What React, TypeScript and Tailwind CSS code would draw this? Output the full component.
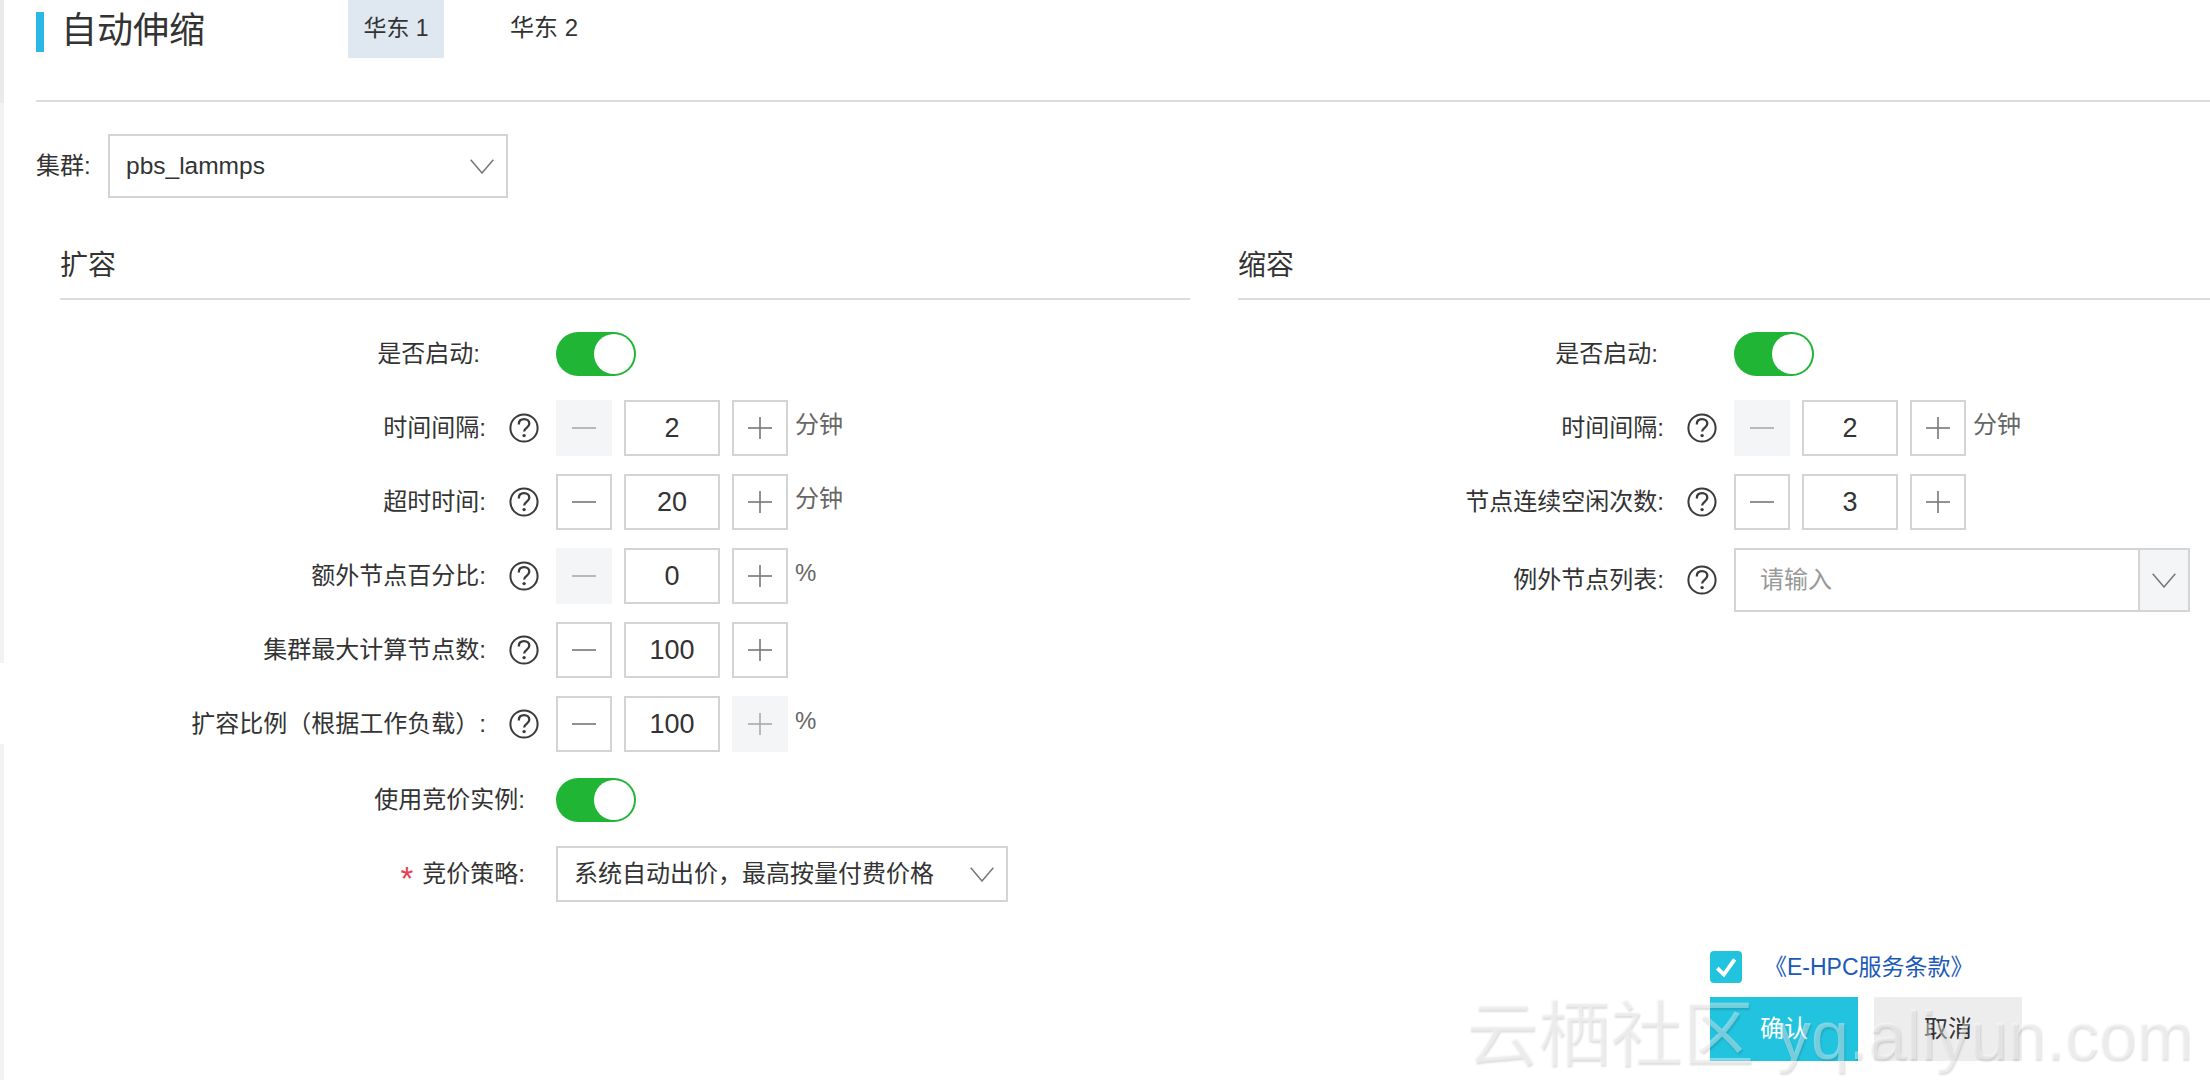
const FONT = "font-['Liberation_Sans','Noto_Sans_CJK_SC',sans-serif]";

function Help() {
  return (
    <svg viewBox="0 0 30 30" className="w-[30px] h-[30px] shrink-0">
      <circle cx="15" cy="15" r="13.6" fill="none" stroke="#3a3a3a" strokeWidth="2" />
      <path d="M9.8 11.4c0-3.4 2.3-5.2 5.3-5.2s5.2 1.9 5.2 4.6c0 4-5.2 4-5.2 7.7" fill="none" stroke="#3a3a3a" strokeWidth="2.3" />
      <circle cx="15.1" cy="22.6" r="1.7" fill="#3a3a3a" />
    </svg>
  );
}

function Chevron() {
  return (
    <svg viewBox="0 0 24 15" className="w-[24px] h-[15px] shrink-0">
      <polyline points="0.7,0.7 12,14 23.3,0.7" fill="none" stroke="#777777" strokeWidth="1.5" />
    </svg>
  );
}

function Toggle() {
  return (
    <div className="w-[80px] h-[44px] rounded-full bg-[#21b536] flex justify-end items-center pr-[2px] shrink-0">
      <div className="w-[40px] h-[40px] rounded-full bg-white" />
    </div>
  );
}

function StepBtn({ kind, disabled }: { kind: "minus" | "plus"; disabled?: boolean }) {
  const color = disabled ? "#a9abad" : "#777777";
  return (
    <div
      className={
        disabled
          ? "w-[56px] h-[56px] bg-[#f4f5f7] flex items-center justify-center shrink-0"
          : "w-[56px] h-[56px] border-2 border-[#d4d4d4] bg-white flex items-center justify-center shrink-0"
      }
    >
      <svg viewBox="0 0 24 24" className="w-[24px] h-[24px]">
        <line x1="0" y1="12" x2="24" y2="12" stroke={color} strokeWidth="1.6" />
        {kind === "plus" && <line x1="12" y1="1" x2="12" y2="23" stroke={color} strokeWidth="1.6" />}
      </svg>
    </div>
  );
}

function Stepper({ value, unit, minusOff, plusOff }: { value: string; unit?: string; minusOff?: boolean; plusOff?: boolean }) {
  return (
    <div className="flex items-start">
      <StepBtn kind="minus" disabled={minusOff} />
      <div className="w-[96px] h-[56px] mx-[12px] border-2 border-[#d4d4d4] flex items-center justify-center text-[27px] text-[#333333] shrink-0">
        {value}
      </div>
      <StepBtn kind="plus" disabled={plusOff} />
      {unit && <span className="ml-[7px] mt-[9px] text-[24px] leading-[32px] text-[#666666]">{unit}</span>}
    </div>
  );
}

function Row({ label, pad, help, required, mt, children }: { label: string; pad: string; help?: boolean; required?: boolean; mt: string; children: React.ReactNode }) {
  return (
    <div className={`flex items-center ${mt}`}>
      <div className="w-[496px] shrink-0 flex items-center justify-end">
        {required && <span className="mr-[9px] mt-[9px] text-[33px] leading-none text-[#e8404f]">*</span>}
        <span className={`text-[24px] text-[#333333] whitespace-nowrap ${pad}`}>{label}</span>
        {help && (
          <div className="w-[70px] flex justify-start pl-[23px] shrink-0">
            <Help />
          </div>
        )}
      </div>
      {children}
    </div>
  );
}

function SectionTitle({ text }: { text: string }) {
  return (
    <div className="h-[68px] border-b-2 border-[#dcdcdc] pt-[16px] text-[28px] leading-[36px] text-[#333333] whitespace-nowrap">{text}</div>
  );
}

export default function App() {
  return (
    <div className={`w-[2210px] h-[1080px] bg-white flex relative overflow-hidden ${FONT}`}>
      <div className="w-[4px] h-full flex flex-col shrink-0">
        <div className="h-[103px] bg-[#e9eaec]" />
        <div className="h-[560px] bg-[#f1f2f4]" />
        <div className="h-[81px] bg-white" />
        <div className="flex-1 bg-[#f1f2f4]" />
      </div>

      <div className="flex-1 min-w-0 pl-[32px] flex flex-col">
        <div className="h-[102px] border-b-2 border-[#dcdcdc] flex items-start shrink-0">
          <div className="w-[8px] h-[40px] mt-[12px] bg-[#2db7e6]" />
          <div className="ml-[17px] mt-[8px] text-[36px] leading-[46px] text-[#333333] whitespace-nowrap w-[287px]">自动伸缩</div>
          <div className="w-[96px] h-[58px] bg-[#dfe7f1] pt-[11px] text-center text-[23px] leading-[34px] text-[#333333]">华东 1</div>
          <div className="ml-[66px] pt-[11px] text-[24px] leading-[34px] text-[#333333]">华东 2</div>
        </div>

        <div className="mt-[32px] flex items-center shrink-0">
          <span className="w-[72px] text-[24px] text-[#333333]">集群:</span>
          <div className="w-[400px] h-[64px] border-2 border-[#d4d4d4] flex items-center justify-between pl-[16px] pr-[12px]">
            <span className="text-[24.5px] text-[#333333]">pbs_lammps</span>
            <Chevron />
          </div>
        </div>

        <div className="mt-[34px] ml-[24px] flex gap-[48px] shrink-0">
          <div className="w-[1130px] shrink-0 flex flex-col">
            <SectionTitle text="扩容" />
            <Row label="是否启动:" pad="pr-[76px]" mt="mt-[32px]">
              <Toggle />
            </Row>
            <Row label="时间间隔:" pad="" help mt="mt-[24px]">
              <Stepper value="2" unit="分钟" minusOff />
            </Row>
            <Row label="超时时间:" pad="" help mt="mt-[18px]">
              <Stepper value="20" unit="分钟" />
            </Row>
            <Row label="额外节点百分比:" pad="" help mt="mt-[18px]">
              <Stepper value="0" unit="%" minusOff />
            </Row>
            <Row label="集群最大计算节点数:" pad="" help mt="mt-[18px]">
              <Stepper value="100" />
            </Row>
            <Row label="扩容比例（根据工作负载）:" pad="" help mt="mt-[18px]">
              <Stepper value="100" unit="%" plusOff />
            </Row>
            <Row label="使用竞价实例:" pad="pr-[31px]" mt="mt-[26px]">
              <Toggle />
            </Row>
            <Row label="竞价策略:" pad="pr-[31px]" required mt="mt-[24px]">
              <div className="w-[452px] h-[56px] border-2 border-[#d4d4d4] flex items-center justify-between pl-[16px] pr-[12px]">
                <span className="text-[24px] text-[#333333] whitespace-nowrap">系统自动出价，最高按量付费价格</span>
                <Chevron />
              </div>
            </Row>
          </div>

          <div className="flex-1 min-w-0 flex flex-col">
            <SectionTitle text="缩容" />
            <Row label="是否启动:" pad="pr-[76px]" mt="mt-[32px]">
              <Toggle />
            </Row>
            <Row label="时间间隔:" pad="" help mt="mt-[24px]">
              <Stepper value="2" unit="分钟" minusOff />
            </Row>
            <Row label="节点连续空闲次数:" pad="" help mt="mt-[18px]">
              <Stepper value="3" />
            </Row>
            <Row label="例外节点列表:" pad="" help mt="mt-[18px]">
              <div className="w-[456px] h-[64px] border-2 border-[#d4d4d4] flex items-stretch">
                <div className="flex-1 flex items-center pl-[24px] text-[24px] text-[#999999]">请输入</div>
                <div className="w-[50px] bg-[#f4f5f7] border-l-2 border-[#d4d4d4] flex items-center justify-center">
                  <Chevron />
                </div>
              </div>
            </Row>
          </div>
        </div>

        <div className="mt-[48px] ml-[1674px] shrink-0">
          <div className="flex items-center">
            <div className="w-[32px] h-[32px] rounded-[4px] bg-[#22c3df] flex items-center justify-center">
              <svg viewBox="0 0 24 24" className="w-[26px] h-[26px]">
                <polyline points="4,13 10,19 20,5" fill="none" stroke="#ffffff" strokeWidth="3.6" />
              </svg>
            </div>
            <span className="ml-[22px] text-[23px] text-[#1c5ab8] whitespace-nowrap">《E-HPC服务条款》</span>
          </div>
          <div className="mt-[12px] flex gap-[16px]">
            <div className="w-[148px] h-[64px] bg-[#22c3df] flex items-center justify-center text-[24px] text-white">确认</div>
            <div className="w-[148px] h-[64px] bg-[#ededed] flex items-center justify-center text-[24px] text-[#333333]">取消</div>
          </div>
        </div>
      </div>

      <div className="absolute left-[1466px] top-[992px] whitespace-nowrap text-[72px] leading-[84px] text-white/40 [text-shadow:1px_2px_2px_rgba(0,0,0,0.13)] pointer-events-none">
        云栖社区<span className="ml-[23px] text-[68px]">yq.aliyun.com</span>
      </div>
    </div>
  );
}
